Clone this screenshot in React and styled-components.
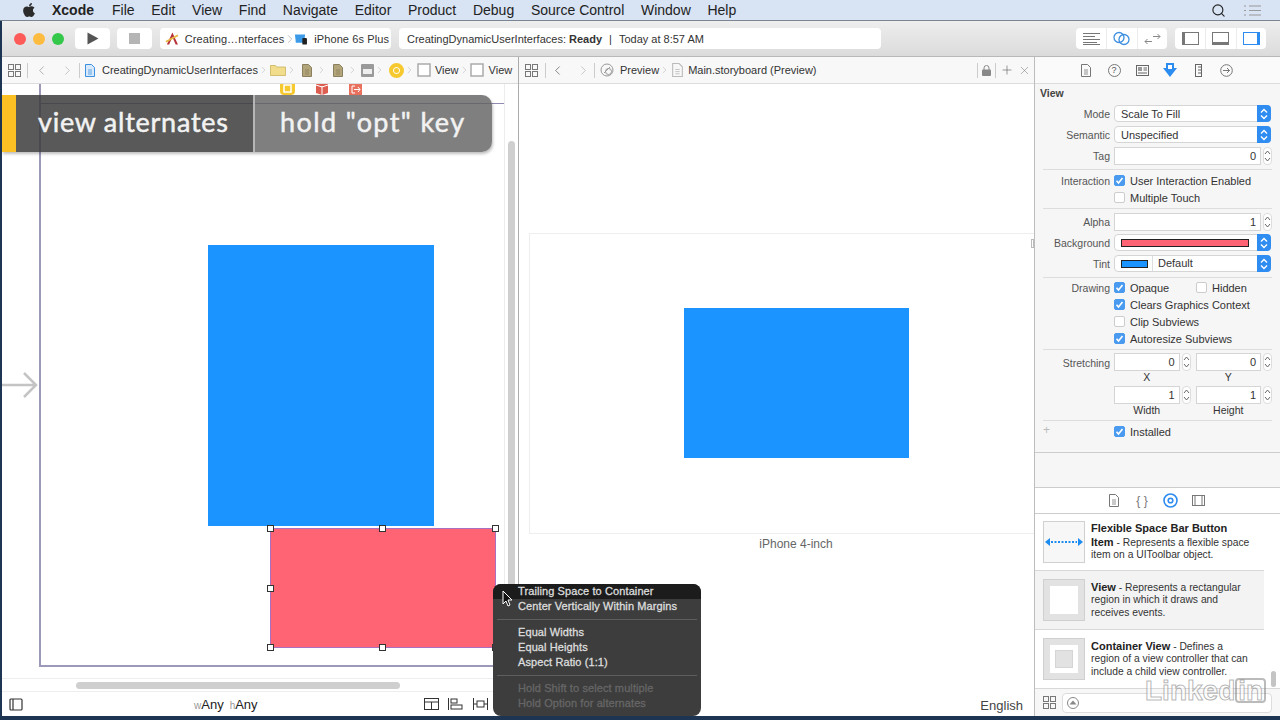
import React from 'react';
import styled, { createGlobalStyle } from 'styled-components';
import { FaApple } from 'react-icons/fa';
import { Search, ChevronLeft, ChevronRight, Plus, X } from 'lucide-react';

const GlobalStyle = createGlobalStyle`
  html, body { margin: 0; padding: 0; background: #1d3553; }
  * { box-sizing: border-box; }
`;

const MENU_ITEMS = ['File', 'Edit', 'View', 'Find', 'Navigate', 'Editor', 'Product', 'Debug', 'Source Control', 'Window', 'Help'];

const GridIcon = () => (
  <svg width="13" height="13" viewBox="0 0 13 13" fill="none" stroke="#777" strokeWidth="1">
    <rect x="0.5" y="0.5" width="5" height="5" /><rect x="7.5" y="0.5" width="5" height="5" />
    <rect x="0.5" y="7.5" width="5" height="5" /><rect x="7.5" y="7.5" width="5" height="5" />
  </svg>
);

const DocIcon = ({ color = '#aaa', fill = 'none', width = 10, height = 13 }) => (
  <svg width={width} height={height} viewBox="0 0 10 13" fill={fill} stroke={color}>
    <path d="M0.5 0.5h6l3 3v9h-9z" />
    <path d="M3 6h4M3 8h4M3 10h4" strokeWidth="0.8" />
  </svg>
);

const SquareIcon = () => (
  <svg width="14" height="14" viewBox="0 0 14 14" fill="#fff" stroke="#aaa" strokeWidth="1.5">
    <rect x="1" y="1" width="12" height="12" />
  </svg>
);

const Sep = () => <SepChevron><ChevronRight size={14} strokeWidth={1} /></SepChevron>;

const LabelRow = ({ label, h, children }) => (
  <Row $h={h}>
    <RowLabel>{label}</RowLabel>
    <RowBody>{children}</RowBody>
  </Row>
);

const Check = ({ on, label, $w }) => (
  <CheckWrap $w={$w}>
    <CheckBox $on={on}>
      {on && (
        <svg width="9" height="9" viewBox="0 0 9 9" fill="none" stroke="#fff" strokeWidth="1.6">
          <path d="M1.5 4.8l2 2.2 4-5" />
        </svg>
      )}
    </CheckBox>
    {label}
  </CheckWrap>
);

const Stepper = () => (
  <StepBox>
    <svg width="7" height="14" viewBox="0 0 7 14" fill="none" stroke="#666" strokeWidth="1">
      <path d="M1 5l2.500-3L6 5M1 9l2.500 3L6 9" />
    </svg>
  </StepBox>
);

const NumberField = ({ value, children }) => (
  <NumberCol>
    <NumberRow>
      <Field>{value}</Field>
      <Stepper />
    </NumberRow>
    {children && <FieldCaption>{children}</FieldCaption>}
  </NumberCol>
);

const Arrows = () => (
  <PopupArrows>
    <svg width="8" height="12" viewBox="0 0 8 12" fill="none" stroke="#fff" strokeWidth="1.4">
      <path d="M1 4.500l3-3 3 3M1 7.500l3 3 3-3" />
    </svg>
  </PopupArrows>
);

const Popup = ({ children }) => (
  <PopupBox>
    {children}
    <Arrows />
  </PopupBox>
);

const Handle = ({ x, y }) => <Grip style={{ left: x, top: y }} />;

export default function App() {
  return (
    <Page>
      <GlobalStyle />
      <MenuBar>
        <AppleMark><FaApple size={16} /></AppleMark>
        <MenuTitle>Xcode</MenuTitle>
        {MENU_ITEMS.map((m) => <MenuItem key={m}>{m}</MenuItem>)}
        <MenuRight>
          <Search size={15} strokeWidth={1.8} color="#222" />
          <svg width="17" height="11" viewBox="0 0 17 11" stroke="#9a9a9a" strokeWidth="1.2">
            <path d="M5 1h12M5 5.500h12M5 10h12M0 1h2M0 5.500h2M0 10h2" />
          </svg>
        </MenuRight>
      </MenuBar>

      <Window>
        <Toolbar>
          <Lights>
            <Light $c="#fc5b57" /><Light $c="#fdbc40" /><Light $c="#34c84a" />
          </Lights>
          <ToolButton $ml={11}>
            <svg width="12" height="13" viewBox="0 0 12 13" fill="#555"><path d="M0.5 0.5l11 6-11 6z" /></svg>
          </ToolButton>
          <ToolButton $ml={7}><StopMark /></ToolButton>
          <Scheme>
            <svg width="17" height="15" viewBox="0 0 17 15">
              <path d="M8 1L2 14h2.500L8 6l3.500 8H14z" fill="#b5323a" />
              <path d="M1 11L14 4" stroke="#e6b840" strokeWidth="2" />
            </svg>
            <SchemeName $ml={4}>Creating…nterfaces</SchemeName>
            <SchemeChevron><ChevronRight size={14} strokeWidth={1} color="#999" /></SchemeChevron>
            <svg width="15" height="12" viewBox="0 0 15 12">
              <path d="M1 1h11l-1 9H2z" fill="#3b9be8" />
              <rect x="9" y="5" width="5" height="7" rx="1" fill="#222" />
            </svg>
            <SchemeName $ml={6}>iPhone 6s Plus</SchemeName>
          </Scheme>
          <Status>
            <span>CreatingDynamicUserInterfaces: <b>Ready</b></span>
            <StatusBar>|</StatusBar>
            <span>Today at 8:57 AM</span>
          </Status>
          <Segments $ml={195}>
            <Segment>
              <svg width="17" height="12" viewBox="0 0 17 12" stroke="#777"><path d="M0 .5h17M0 3.500h12M0 6.500h17M0 9.500h14M0 11.500h17" /></svg>
            </Segment>
            <Segment>
              <svg width="17" height="15" viewBox="0 0 17 15" fill="none" stroke="#3d8fe0" strokeWidth="1.3"><circle cx="6" cy="6.500" r="5" /><circle cx="11" cy="8.500" r="5" /></svg>
            </Segment>
            <Segment>
              <svg width="17" height="12" viewBox="0 0 17 12" fill="none" stroke="#888"><path d="M8 8.500H1l2.500-2.500M1 8.500L3.500 11M9 3.500h7l-2.500-2.500M16 3.500L13.500 6" /></svg>
            </Segment>
          </Segments>
          <Segments $ml={8}>
            <Segment><PanelGlyph $side="left" /></Segment>
            <Segment><PanelGlyph $side="bottom" /></Segment>
            <Segment><PanelGlyph $side="right" $active /></Segment>
          </Segments>
        </Toolbar>

        <Body>
          <Editor>
            <LeftPane>
              <JumpBar>
                <JumpIcon $ml={6}><GridIcon /></JumpIcon>
                <JumpDivider $ml={6} />
                <JumpNav $ml={6}><ChevronLeft size={15} strokeWidth={1} /></JumpNav>
                <JumpNav $ml={11} $dim><ChevronRight size={15} strokeWidth={1} /></JumpNav>
                <JumpDivider $ml={4} />
                <JumpIcon $ml={5}><DocIcon color="#3d8fe0" fill="#d7e9fb" /></JumpIcon>
                <JumpText $ml={7}>CreatingDynamicUserInterfaces</JumpText>
                <Sep />
                <JumpIcon $ml={1}>
                  <svg width="16" height="12" viewBox="0 0 16 12" fill="#f1dd8b" stroke="#c9b45c" strokeWidth="0.8"><path d="M.5 1.500h5l1 1.500h9v8.500H.5z" /></svg>
                </JumpIcon>
                <Sep />
                <JumpIcon $ml={5}><DocIcon color="#8a7f5e" fill="#b3a57a" /></JumpIcon>
                <JumpSpaced><Sep /></JumpSpaced>
                <JumpIcon $ml={3}><DocIcon color="#8a7f5e" fill="#b3a57a" /></JumpIcon>
                <JumpSpaced><Sep /></JumpSpaced>
                <JumpIcon>
                  <svg width="13" height="13" viewBox="0 0 13 13" fill="#9a9a9a"><rect width="13" height="13" rx="1" /><rect x="2" y="5" width="9" height="5" fill="#eee" /></svg>
                </JumpIcon>
                <Sep />
                <JumpIcon $ml={4}><SceneDot /></JumpIcon>
                <Sep />
                <JumpIcon $ml={2}><SquareIcon /></JumpIcon>
                <JumpText $ml={4}>View</JumpText>
                <Sep />
                <JumpIcon $ml={0}><SquareIcon /></JumpIcon>
                <JumpText $ml={5}>View</JumpText>
              </JumpBar>

              <Canvas>
                <SceneFrame />
                <SceneTopLine />
                <ScrollGutter />
                <SceneIcons>
                  <svg width="15" height="11" viewBox="0 0 15 11"><path d="M0 0h15v7a4 4 0 0 1-4 4H4a4 4 0 0 1-4-4z" fill="#f6c92f" /><rect x="4" y="1" width="7" height="7" fill="none" stroke="#fff" strokeWidth="1.500" /></svg>
                  <svg width="14" height="11" viewBox="0 0 14 11"><path d="M1 0h12v9l-6 2-6-2z" fill="#dd5d50" /><path d="M7 2v9M1 1l6 2 6-2" stroke="#fff" fill="none" /></svg>
                  <svg width="13" height="11" viewBox="0 0 13 11"><rect width="13" height="11" fill="#e8705c" /><path d="M6 2H3v7h3M5 5.500h6M9 3l2 2.500L9 8" stroke="#fff" fill="none" /></svg>
                </SceneIcons>
                <BlueView />
                <RedView />
                <Handle x={265} y={441} /><Handle x={377} y={441} /><Handle x={490} y={441} />
                <Handle x={265} y={501} />
                <Handle x={265} y={560} /><Handle x={377} y={560} /><Handle x={490} y={560} />
                <EntryArrow>
                  <svg width="36" height="30" viewBox="0 0 36 30" fill="none" stroke="#c4c4c4" strokeWidth="2.500">
                    <path d="M0 15h34M22 3l12 12-12 12" />
                  </svg>
                </EntryArrow>
                <VScroll />
              </Canvas>

              <HScrollTrack><HScrollThumb /></HScrollTrack>
              <BottomBar>
                <svg width="14" height="13" viewBox="0 0 14 13" fill="none" stroke="#333" strokeWidth="1.200">
                  <rect x="1" y="1" width="12" height="11" rx="1" /><path d="M4 1v11" />
                </svg>
                <SizeClass>
                  <SizeKey>w</SizeKey>Any<SizeGap /><SizeKey>h</SizeKey>Any
                </SizeClass>
                <BottomTools>
                  <svg width="15" height="12" viewBox="0 0 15 12" fill="none" stroke="#333"><rect x=".5" y=".5" width="14" height="11" /><path d="M.5 4h14M7.500 4v8" /></svg>
                  <svg width="15" height="12" viewBox="0 0 15 12" fill="none" stroke="#333"><path d="M.5 0v12" /><rect x="3" y="1" width="6" height="4" /><rect x="3" y="7" width="11" height="4" /></svg>
                  <svg width="15" height="12" viewBox="0 0 15 12" fill="none" stroke="#333"><path d="M.5 0v12M14.500 0v12M.5 6H4M11 6h3.500" /><rect x="4" y="3" width="7" height="6" /></svg>
                </BottomTools>
              </BottomBar>
            </LeftPane>

            <RightPane>
              <JumpBar>
                <JumpIcon $ml={6}><GridIcon /></JumpIcon>
                <JumpDivider $ml={7} />
                <JumpNav $ml={4}><ChevronLeft size={15} strokeWidth={1} color="#444" /></JumpNav>
                <JumpNav $ml={11} $dim><ChevronRight size={15} strokeWidth={1} /></JumpNav>
                <JumpDivider $ml={3} />
                <JumpIcon $ml={5}>
                  <svg width="14" height="14" viewBox="0 0 14 14" fill="none" stroke="#999"><circle cx="7" cy="7" r="6" /><path d="M4 10l6-6" /><circle cx="8.500" cy="8.500" r="3" /></svg>
                </JumpIcon>
                <JumpText $ml={6}>Preview</JumpText>
                <Sep />
                <JumpIcon $ml={2}><DocIcon width={11} height={14} color="#bbb" /></JumpIcon>
                <JumpText $ml={5}>Main.storyboard (Preview)</JumpText>
                <JumpEnd>
                  <JumpDivider />
                  <svg width="9" height="11" viewBox="0 0 9 11" fill="#888"><rect y="4.500" width="9" height="6.500" rx="1" /><path d="M2 5V3a2.500 2.500 0 0 1 5 0v2" fill="none" stroke="#888" /></svg>
                  <JumpDivider />
                  <Plus size={14} strokeWidth={1} color="#555" />
                  <X size={13} strokeWidth={1} color="#777" />
                </JumpEnd>
              </JumpBar>
              <PreviewArea>
                <DeviceFrame>
                  <PreviewRect />
                  <DeviceGrip />
                </DeviceFrame>
                <DeviceName>iPhone 4-inch</DeviceName>
                <Language>English</Language>
              </PreviewArea>
            </RightPane>
          </Editor>

          <Inspector>
            <InspectorTabs>
              <DocIcon width={10} height={13} color="#777" />
              <TabGlyph>?</TabGlyph>
              <svg width="13" height="11" viewBox="0 0 13 11" fill="none" stroke="#666"><rect x=".5" y=".5" width="12" height="10" /><rect x="2" y="2" width="4" height="4" fill="#999" stroke="none" /><path d="M7.500 3H11M7.500 5H11M2 8h9" /></svg>
              <svg width="14" height="14" viewBox="0 0 14 14" fill="#2d8cf0"><path d="M3 0h8v5h3l-7 9-7-9h3z" /><rect x="5" y="2" width="4" height="4" fill="#fff" /></svg>
              <svg width="7" height="13" viewBox="0 0 7 13" fill="none" stroke="#666"><rect x=".5" y=".5" width="6" height="12" /><path d="M3 3h3M3 6h3M3 9h3" /></svg>
              <svg width="13" height="13" viewBox="0 0 13 13" fill="none" stroke="#777"><circle cx="6.500" cy="6.500" r="5.800" /><path d="M3 6.500h6.500M7 4l2.500 2.500L7 9" /></svg>
            </InspectorTabs>
            <InspectorHeading>View</InspectorHeading>

            <Section $pt={0} $pb={3}>
              <LabelRow label="Mode" h={21}><Popup>Scale To Fill</Popup></LabelRow>
              <LabelRow label="Semantic" h={21}><Popup>Unspecified</Popup></LabelRow>
              <LabelRow label="Tag" h={21}><NumberField value="0" /></LabelRow>
            </Section>
            <Section $pt={2} $pb={2}>
              <LabelRow label="Interaction" h={17}><Check on label="User Interaction Enabled" /></LabelRow>
              <LabelRow h={17}><Check label="Multiple Touch" /></LabelRow>
            </Section>
            <Section $pt={2} $pb={3}>
              <LabelRow label="Alpha" h={21}><NumberField value="1" /></LabelRow>
              <LabelRow label="Background" h={21}>
                <PopupBox><RedSwatch /><Arrows /></PopupBox>
              </LabelRow>
              <LabelRow label="Tint" h={21}>
                <PopupBox><BlueSwatch /><TintName>Default</TintName><Arrows /></PopupBox>
              </LabelRow>
            </Section>
            <Section $pt={1} $pb={2}>
              <LabelRow label="Drawing" h={17}>
                <Check on label="Opaque" $w={82} /><Check label="Hidden" />
              </LabelRow>
              <LabelRow h={17}><Check on label="Clears Graphics Context" /></LabelRow>
              <LabelRow h={17}><Check label="Clip Subviews" /></LabelRow>
              <LabelRow h={17}><Check on label="Autoresize Subviews" /></LabelRow>
            </Section>
            <Section $pt={3} $pb={1}>
              <Row $h={33} $top>
                <RowLabel $offset={4}>Stretching</RowLabel>
                <RowBody $gap={5}>
                  <NumberField value="0">X</NumberField>
                  <NumberField value="0">Y</NumberField>
                </RowBody>
              </Row>
              <Row $h={33} $top>
                <RowLabel />
                <RowBody $gap={5}>
                  <NumberField value="1">Width</NumberField>
                  <NumberField value="1">Height</NumberField>
                </RowBody>
              </Row>
            </Section>
            <Section $pt={2} $pb={11} $last>
              <PlusMark>+</PlusMark>
              <LabelRow h={17}><Check on label="Installed" /></LabelRow>
            </Section>

            <InspectorFill />

            <LibraryTabs>
              <DocIcon width={10} height={13} color="#777" />
              <TabBraces>{'{ }'}</TabBraces>
              <svg width="15" height="15" viewBox="0 0 15 15" fill="none" stroke="#2d8cf0" strokeWidth="1.600"><circle cx="7.500" cy="7.500" r="6.500" /><circle cx="7.500" cy="7.500" r="2.300" /></svg>
              <svg width="13" height="11" viewBox="0 0 13 11" fill="none" stroke="#777"><rect x=".5" y=".5" width="12" height="10" /><path d="M3 1v9M10 1v9" /></svg>
            </LibraryTabs>

            <Library>
              <LibraryItem $h={57}>
                <LibraryThumb $light>
                  <svg width="38" height="10" viewBox="0 0 38 10" fill="#1c8cf0">
                    <path d="M0 5l5-4v8zM38 5l-5-4v8z" />
                    <path d="M6 5h26" stroke="#1c8cf0" strokeWidth="2" strokeDasharray="2 1.500" />
                  </svg>
                </LibraryThumb>
                <LibraryText><b>Flexible Space Bar Button Item</b> - Represents a flexible space item on a UIToolbar object.</LibraryText>
              </LibraryItem>
              <LibraryItem $h={59} $selected>
                <LibraryThumb><ThumbInner /></LibraryThumb>
                <LibraryText><b>View</b> - Represents a rectangular region in which it draws and receives events.</LibraryText>
              </LibraryItem>
              <LibraryItem $h={58}>
                <LibraryThumb><ThumbInner><ThumbCore /></ThumbInner></LibraryThumb>
                <LibraryText><b>Container View</b> - Defines a region of a view controller that can include a child view controller.</LibraryText>
              </LibraryItem>
              <LibraryScroll />
            </Library>

            <FilterBar>
              <GridIcon />
              <FilterInput>
                <svg width="12" height="12" viewBox="0 0 12 12" fill="none" stroke="#888"><circle cx="6" cy="6" r="5.500" /><path d="M2.500 7.500L6 3.500l3.500 4z" fill="#888" stroke="none" /></svg>
              </FilterInput>
            </FilterBar>
          </Inspector>
        </Body>
      </Window>
      <BottomStrip />

      <Caption>
        <CaptionAccent />
        <CaptionLead>view alternates</CaptionLead>
        <CaptionTail>hold "opt" key</CaptionTail>
      </Caption>

      <ContextMenu>
        <MenuLine $active>Trailing Space to Container</MenuLine>
        <MenuLine>Center Vertically Within Margins</MenuLine>
        <MenuRule />
        <MenuLine>Equal Widths</MenuLine>
        <MenuLine>Equal Heights</MenuLine>
        <MenuLine>Aspect Ratio (1:1)</MenuLine>
        <MenuRule />
        <MenuLine $off>Hold Shift to select multiple</MenuLine>
        <MenuLine $off>Hold Option for alternates</MenuLine>
      </ContextMenu>
      <Cursor>
        <svg width="11" height="17" viewBox="0 0 11 17" fill="#111" stroke="#fff" strokeWidth="1">
          <path d="M1 1v13l3-3 2 5 2-1-2-5h4z" />
        </svg>
      </Cursor>

      <Watermark>
        <WatermarkWord>Linked</WatermarkWord>
        <WatermarkBox>in</WatermarkBox>
      </Watermark>
    </Page>
  );
}

const Page = styled.div`
  position: relative;
  width: 1280px;
  height: 720px;
  overflow: hidden;
  display: flex;
  flex-direction: column;
  font-family: "Liberation Sans", Arial, sans-serif;
  background: #1d3553;
`;

const MenuBar = styled.div`
  height: 21px;
  flex: none;
  display: flex;
  align-items: center;
  padding-left: 21px;
  background: #d8e3f3;
  border-bottom: 1px solid #7b8594;
  font-size: 14px;
  color: #222;
`;
const AppleMark = styled.div`
  display: flex;
  width: 16px;
  margin-right: 15px;
  color: #2b2b2b;
`;
const MenuTitle = styled.div`
  font-weight: 700;
  margin-right: 18px;
`;
const MenuItem = styled.div`
  margin-right: 16.7px;
`;
const MenuRight = styled.div`
  margin-left: auto;
  margin-right: 19px;
  display: flex;
  align-items: center;
  gap: 18px;
`;

const Window = styled.div`
  flex: 1;
  min-height: 0;
  display: flex;
  flex-direction: column;
  margin-left: 2px;
  background: #fff;
`;
const BottomStrip = styled.div`
  height: 4px;
  flex: none;
  background: #1d3553;
`;

const Toolbar = styled.div`
  height: 36px;
  flex: none;
  display: flex;
  align-items: center;
  padding-left: 12px;
  background: linear-gradient(#eeeeee, #dbdbdb);
  border-bottom: 1px solid #b8b8b8;
  font-size: 11px;
  color: #333;
`;
const Lights = styled.div`
  display: flex;
  gap: 7px;
`;
const Light = styled.div`
  width: 12px;
  height: 12px;
  border-radius: 50%;
  background: ${(p) => p.$c};
`;
const ToolButton = styled.div`
  width: 35px;
  height: 21px;
  margin-left: ${(p) => p.$ml}px;
  display: flex;
  align-items: center;
  justify-content: center;
  background: #fff;
  border-radius: 4px;
`;
const StopMark = styled.div`
  width: 11px;
  height: 11px;
  background: #b5b5b5;
`;
const Scheme = styled.div`
  width: 231px;
  height: 21px;
  margin-left: 8px;
  padding-left: 5px;
  display: flex;
  align-items: center;
  background: #fff;
  border-radius: 4px;
  white-space: nowrap;
`;
const SchemeName = styled.span`
  margin: 0 2px 0 ${(p) => p.$ml}px;
  letter-spacing: 0.1px;
`;
const SchemeChevron = styled.div`
  display: flex;
  margin: 0 -3px;
`;
const Status = styled.div`
  width: 482px;
  height: 21px;
  margin-left: 8px;
  padding-left: 8px;
  display: flex;
  align-items: center;
  background: #fff;
  border-radius: 4px;
  white-space: nowrap;
`;
const StatusBar = styled.span`
  margin: 0 7px;
`;
const Segments = styled.div`
  width: 91px;
  height: 21px;
  margin-left: ${(p) => p.$ml}px;
  display: grid;
  grid-template-columns: repeat(3, 1fr);
  background: #fff;
  border-radius: 4px;
`;
const Segment = styled.div`
  display: flex;
  align-items: center;
  justify-content: center;
  border-left: 1px solid #ececec;
  &:first-child { border-left: 0; }
`;
const PanelGlyph = styled.div`
  width: 17px;
  height: 13px;
  border: 1px solid ${(p) => (p.$active ? '#2d8cf0' : '#777')};
  ${(p) => (p.$side === 'left' ? 'border-left-width: 3px;' : '')}
  ${(p) => (p.$side === 'bottom' ? 'border-bottom-width: 3px;' : '')}
  ${(p) => (p.$side === 'right' ? 'border-right-width: 3px;' : '')}
`;

const Body = styled.div`
  flex: 1;
  min-height: 0;
  display: flex;
`;
const Editor = styled.div`
  width: 1032px;
  flex: none;
  display: flex;
`;
const LeftPane = styled.div`
  width: 517px;
  flex: none;
  display: flex;
  flex-direction: column;
  border-right: 1px solid #ababab;
`;
const RightPane = styled.div`
  flex: 1;
  min-width: 0;
  display: flex;
  flex-direction: column;
`;

const JumpBar = styled.div`
  height: 27px;
  flex: none;
  display: flex;
  align-items: center;
  background: #f8f8f8;
  border-bottom: 1px solid #dcdcdc;
  font-size: 11px;
  color: #333;
  white-space: nowrap;
`;
const JumpIcon = styled.div`
  display: flex;
  margin-left: ${(p) => p.$ml || 0}px;
`;
const JumpDivider = styled.div`
  width: 1px;
  height: 15px;
  background: #ccc;
  margin-left: ${(p) => p.$ml || 0}px;
`;
const JumpNav = styled.div`
  display: flex;
  margin-left: ${(p) => p.$ml}px;
  color: ${(p) => (p.$dim ? '#aaa' : '#888')};
`;
const JumpText = styled.span`
  margin-left: ${(p) => p.$ml}px;
`;
const SepChevron = styled.div`
  display: flex;
  color: #aaa;
  width: 11px;
  justify-content: center;
`;
const JumpSpaced = styled.div`
  margin: 0 3px 0 4px;
`;
const SceneDot = styled.div`
  width: 15px;
  height: 15px;
  border-radius: 50%;
  background: #f6c92f;
  border: 4px solid #f6c92f;
  box-shadow: inset 0 0 0 1px #fff;
`;
const JumpEnd = styled.div`
  margin-left: auto;
  margin-right: 3px;
  display: flex;
  align-items: center;
  gap: 4px;
`;

const Canvas = styled.div`
  position: relative;
  flex: 1;
  min-height: 0;
  overflow: hidden;
  background: #fff;
`;
const SceneFrame = styled.div`
  position: absolute;
  left: 37px;
  top: 0;
  width: 465px;
  height: 583px;
  border-left: 2px solid #9c99b8;
  border-bottom: 2px solid #9c99b8;
`;
const SceneTopLine = styled.div`
  position: absolute;
  left: 39px;
  top: 19px;
  width: 463px;
  height: 1px;
  background: #8f8cb0;
`;
const ScrollGutter = styled.div`
  position: absolute;
  left: 502px;
  top: 0;
  bottom: 0;
  width: 1px;
  background: #ececec;
`;
const SceneIcons = styled.div`
  position: absolute;
  left: 278px;
  top: 0;
  display: flex;
  gap: 20px;
`;
const BlueView = styled.div`
  position: absolute;
  left: 206px;
  top: 161px;
  width: 226px;
  height: 281px;
  background: #1b94ff;
`;
const RedView = styled.div`
  position: absolute;
  left: 268px;
  top: 444px;
  width: 226px;
  height: 120px;
  background: #ff6474;
  border: 1px solid #a96fc0;
`;
const Grip = styled.div`
  position: absolute;
  width: 7px;
  height: 7px;
  background: #fff;
  border: 1px solid #333;
`;
const EntryArrow = styled.div`
  position: absolute;
  left: 0;
  top: 286px;
`;
const VScroll = styled.div`
  position: absolute;
  left: 506px;
  top: 57px;
  width: 7px;
  height: 480px;
  border-radius: 4px;
  background: #cfcfcf;
`;
const HScrollTrack = styled.div`
  height: 14px;
  flex: none;
  padding: 3px 0 0 74px;
  border-top: 1px solid #eee;
  border-bottom: 1px solid #eee;
`;
const HScrollThumb = styled.div`
  width: 324px;
  height: 7px;
  border-radius: 4px;
  background: #cfcfcf;
`;
const BottomBar = styled.div`
  height: 24px;
  flex: none;
  display: flex;
  align-items: center;
  padding-left: 7px;
`;
const SizeClass = styled.div`
  margin-left: 171px;
  font-size: 13px;
  color: #222;
`;
const SizeKey = styled.span`
  font-size: 10px;
  color: #999;
`;
const SizeGap = styled.span`
  display: inline-block;
  width: 6px;
`;
const BottomTools = styled.div`
  margin-left: 166px;
  display: flex;
  gap: 9.500px;
`;

const PreviewArea = styled.div`
  position: relative;
  flex: 1;
  min-height: 0;
  padding: 149px 0 0 10px;
  background: #fff;
`;
const DeviceFrame = styled.div`
  position: relative;
  height: 301px;
  display: flex;
  align-items: center;
  justify-content: center;
  padding: 0 0 1px 29px;
  border: 1px solid #eee;
  border-right: 0;
`;
const PreviewRect = styled.div`
  width: 225px;
  height: 150px;
  background: #1b94ff;
`;
const DeviceGrip = styled.div`
  position: absolute;
  right: 0;
  top: 5px;
  width: 3px;
  height: 9px;
  border: 1px solid #bbb;
`;
const DeviceName = styled.div`
  margin-top: 3px;
  padding-left: 29px;
  text-align: center;
  font-size: 12px;
  color: #666;
`;
const Language = styled.div`
  position: absolute;
  right: 11px;
  bottom: 3px;
  font-size: 13px;
  color: #444;
`;

const Inspector = styled.div`
  flex: 1;
  min-width: 0;
  display: flex;
  flex-direction: column;
  border-left: 1px solid #bdbdbd;
  background: #f6f6f6;
  font-size: 11px;
  color: #333;
`;
const InspectorTabs = styled.div`
  height: 27px;
  flex: none;
  display: grid;
  grid-template-columns: repeat(6, 28px);
  justify-content: start;
  justify-items: center;
  align-items: center;
  padding-left: 37px;
  border-bottom: 1px solid #dcdcdc;
  background: #fafafa;
`;
const TabGlyph = styled.div`
  width: 13px;
  height: 13px;
  border: 1px solid #777;
  border-radius: 50%;
  font-size: 9px;
  line-height: 11px;
  text-align: center;
  color: #555;
`;
const InspectorHeading = styled.div`
  height: 19px;
  flex: none;
  padding: 3px 0 0 5px;
  font-weight: 700;
  font-size: 10.5px;
  color: #444;
`;
const Section = styled.div`
  position: relative;
  flex: none;
  margin: 0 8px 0 8px;
  padding: ${(p) => p.$pt}px 0 ${(p) => p.$pb}px;
  border-bottom: 1px solid ${(p) => (p.$last ? 'transparent' : '#ddd')};
`;
const Row = styled.div`
  display: grid;
  grid-template-columns: 67px 1fr;
  column-gap: 4px;
  align-items: ${(p) => (p.$top ? 'start' : 'center')};
  height: ${(p) => p.$h}px;
`;
const RowLabel = styled.div`
  text-align: right;
  white-space: nowrap;
  font-size: 10.5px;
  color: #555;
  padding-top: ${(p) => p.$offset || 0}px;
`;
const RowBody = styled.div`
  display: flex;
  align-items: center;
  min-width: 0;
  gap: ${(p) => p.$gap || 0}px;
`;
const PopupBox = styled.div`
  position: relative;
  width: 157px;
  height: 17px;
  display: flex;
  align-items: center;
  padding-left: 6px;
  background: #fff;
  border: 1px solid #d5d5d5;
  border-radius: 4px;
`;
const PopupArrows = styled.div`
  position: absolute;
  right: -1px;
  top: -1px;
  bottom: -1px;
  width: 14px;
  display: flex;
  align-items: center;
  justify-content: center;
  background: #2f8df2;
  border-radius: 0 4px 4px 0;
`;
const RedSwatch = styled.div`
  width: 128px;
  height: 8px;
  background: #ff6474;
  border: 1px solid #222;
`;
const BlueSwatch = styled.div`
  width: 27px;
  height: 8px;
  background: #1b94ff;
  border: 1px solid #222;
`;
const TintName = styled.span`
  margin-left: 4px;
  padding-left: 5px;
  line-height: 15px;
  border-left: 1px solid #ddd;
`;
const NumberCol = styled.div`
  flex: 1;
  min-width: 0;
`;
const NumberRow = styled.div`
  display: flex;
  align-items: center;
  gap: 2px;
`;
const Field = styled.div`
  flex: 1;
  height: 18px;
  line-height: 16px;
  padding-right: 4px;
  text-align: right;
  background: #fff;
  border: 1px solid #d5d5d5;
`;
const StepBox = styled.div`
  width: 9px;
  height: 18px;
  display: flex;
  align-items: center;
  justify-content: center;
  overflow: hidden;
  background: #fff;
  border: 1px solid #ddd;
  border-radius: 4px;
`;
const FieldCaption = styled.div`
  padding-right: 11px;
  text-align: center;
  line-height: 10px;
  font-size: 10.5px;
  margin-top: 1px;
`;
const CheckWrap = styled.div`
  display: flex;
  align-items: center;
  gap: 5px;
  white-space: nowrap;
  ${(p) => (p.$w ? `width: ${p.$w}px;` : '')}
`;
const CheckBox = styled.div`
  width: 11px;
  height: 11px;
  display: flex;
  align-items: center;
  justify-content: center;
  border-radius: 2px;
  background: ${(p) => (p.$on ? '#4a9bf0' : '#fff')};
  border: 1px solid ${(p) => (p.$on ? '#4a9bf0' : '#ccc')};
`;
const PlusMark = styled.div`
  position: absolute;
  left: 0;
  top: 2px;
  color: #bbb;
  font-size: 12px;
`;
const InspectorFill = styled.div`
  flex: 1;
  border-top: 1px solid #ccc;
`;
const LibraryTabs = styled.div`
  height: 27px;
  flex: none;
  display: grid;
  grid-template-columns: repeat(4, 28px);
  justify-content: start;
  justify-items: center;
  align-items: center;
  padding-left: 65px;
  background: #fff;
  border-top: 1px solid #ccc;
  border-bottom: 1px solid #ccc;
`;
const TabBraces = styled.div`
  font-size: 12px;
  color: #777;
`;
const Library = styled.div`
  position: relative;
  height: 174px;
  flex: none;
  padding-right: 16px;
  background: #fff;
`;
const LibraryItem = styled.div`
  height: ${(p) => p.$h}px;
  display: flex;
  align-items: center;
  gap: 6px;
  padding-left: 8px;
  background: ${(p) => (p.$selected ? '#f3f3f3' : '#fff')};
  border-bottom: 1px solid #d8d8d8;
  &:nth-child(3) { border-bottom: 0; }
`;
const LibraryThumb = styled.div`
  width: 42px;
  height: 42px;
  flex: none;
  display: flex;
  align-items: center;
  justify-content: center;
  background: ${(p) => (p.$light ? '#f7f7f7' : '#e2e2e2')};
  border: 1px solid #d0d0d0;
`;
const ThumbInner = styled.div`
  width: 28px;
  height: 28px;
  display: flex;
  align-items: center;
  justify-content: center;
  background: #fff;
`;
const ThumbCore = styled.div`
  width: 18px;
  height: 18px;
  background: #e2e2e2;
  border: 1px solid #d5d5d5;
`;
const LibraryText = styled.div`
  max-width: 160px;
  line-height: 12.5px;
  font-size: 10.3px;
  color: #333;
  b { color: #222; font-size: 11px; }
`;
const LibraryScroll = styled.div`
  position: absolute;
  right: 4px;
  bottom: 1px;
  width: 5px;
  height: 16px;
  border-radius: 3px;
  background: #c4c4c4;
`;
const FilterBar = styled.div`
  height: 28px;
  flex: none;
  display: flex;
  align-items: center;
  gap: 6px;
  padding: 0 8px;
  background: #f7f7f7;
  border-top: 1px solid #d8d8d8;
`;
const FilterInput = styled.div`
  flex: 1;
  height: 20px;
  display: flex;
  align-items: center;
  padding-left: 4px;
  background: #fff;
  border: 1px solid #ddd;
  border-radius: 4px;
`;

const Caption = styled.div`
  position: absolute;
  left: 2px;
  top: 95px;
  width: 490px;
  height: 57px;
  display: flex;
  font-family: Lato, sans-serif;
  font-size: 27px;
  color: #f2f2f2;
  -webkit-text-stroke: 0.5px #f2f2f2;
  box-shadow: 1px 2px 3px rgba(0, 0, 0, 0.25);
  border-radius: 0 10px 10px 0;
`;
const CaptionAccent = styled.div`
  width: 14px;
  background: #fac024;
`;
const CaptionLead = styled.div`
  width: 239px;
  padding-left: 22px;
  line-height: 53px;
  letter-spacing: 0.75px;
  background: rgba(60, 60, 60, 0.85);
  border-right: 2px solid #b5b5b5;
`;
const CaptionTail = styled.div`
  flex: 1;
  padding-left: 25px;
  line-height: 53px;
  letter-spacing: 1.4px;
  background: rgba(95, 95, 95, 0.8);
  border-radius: 0 10px 10px 0;
`;

const ContextMenu = styled.div`
  position: absolute;
  left: 493px;
  top: 584px;
  width: 208px;
  height: 132px;
  background: #3d3d3d;
  border-radius: 8px;
  overflow: hidden;
`;
const MenuLine = styled.div`
  height: 15px;
  padding-left: 25px;
  font-size: 11px;
  line-height: 15px;
  letter-spacing: 0.1px;
  -webkit-text-stroke: 0.3px currentColor;
  white-space: nowrap;
  color: ${(p) => (p.$off ? '#666' : '#ddd')};
  background: ${(p) => (p.$active ? '#1c1c1c' : 'transparent')};
`;
const MenuRule = styled.div`
  height: 1px;
  margin: 5px 4px 5px;
  background: #5e5e5e;
`;
const Cursor = styled.div`
  position: absolute;
  left: 502px;
  top: 590px;
  display: flex;
`;

const Watermark = styled.div`
  position: absolute;
  left: 1145px;
  top: 678px;
  height: 25px;
  display: flex;
  align-items: center;
  font-size: 28px;
  font-weight: 700;
  color: rgba(255, 255, 255, 0.6);
  -webkit-text-stroke: 1px rgba(120, 120, 120, 0.55);
`;
const WatermarkWord = styled.span``;
const WatermarkBox = styled.span`
  padding: 0 1px;
  line-height: 21px;
  border: 2px solid rgba(120, 120, 120, 0.5);
  border-radius: 4px;
`;
